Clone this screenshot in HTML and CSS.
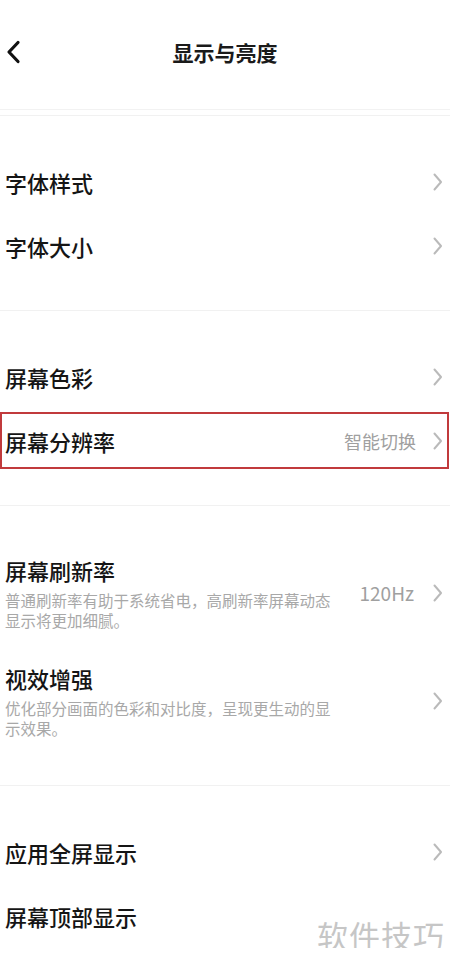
FILE: index.html
```html
<!DOCTYPE html>
<html lang="zh-CN">
<head>
  <meta charset="UTF-8">
  <meta name="viewport" content="width=device-width, initial-scale=1.0">
  <title>显示与亮度</title>
  <link rel="stylesheet" href="styles.css">
</head>
<body>

  <div class="header">
    <div class="bar">
      <svg class="back" width="15" height="24" viewBox="0 0 15 24">
        <path d="M12 2.5 L3 12 L12 21.5" fill="none" stroke="#111" stroke-width="3.2" stroke-linecap="round" stroke-linejoin="round"/>
      </svg>
      <h1 class="title">显示与亮度</h1>
      <span></span>
    </div>
  </div>

  <!-- 字体 -->
  <div class="section first">
    <div class="row">
      <span class="label">字体样式</span>
      <svg class="arrow" width="10" height="18" viewBox="0 0 10 18"><path d="M1.5 1.5 L8 9 L1.5 16.5"/></svg>
    </div>
    <div class="row">
      <span class="label">字体大小</span>
      <svg class="arrow" width="10" height="18" viewBox="0 0 10 18"><path d="M1.5 1.5 L8 9 L1.5 16.5"/></svg>
    </div>
  </div>

  <!-- 屏幕 -->
  <div class="section">
    <div class="row">
      <span class="label">屏幕色彩</span>
      <svg class="arrow" width="10" height="18" viewBox="0 0 10 18"><path d="M1.5 1.5 L8 9 L1.5 16.5"/></svg>
    </div>
    <div class="row marked">
      <span class="label">屏幕分辨率</span>
      <span class="value">智能切换</span>
      <svg class="arrow" width="10" height="18" viewBox="0 0 10 18"><path d="M1.5 1.5 L8 9 L1.5 16.5"/></svg>
    </div>
  </div>

  <!-- 刷新率 / 视效 -->
  <div class="section detail">
    <div class="row tall">
      <div class="text">
        <span class="label">屏幕刷新率</span>
        <p class="desc">普通刷新率有助于系统省电，高刷新率屏幕动态显示将更加细腻。</p>
      </div>
      <span class="value">120Hz</span>
      <svg class="arrow" width="10" height="18" viewBox="0 0 10 18"><path d="M1.5 1.5 L8 9 L1.5 16.5"/></svg>
    </div>
    <div class="row tall">
      <div class="text">
        <span class="label">视效增强</span>
        <p class="desc">优化部分画面的色彩和对比度，呈现更生动的显示效果。</p>
      </div>
      <svg class="arrow" width="10" height="18" viewBox="0 0 10 18"><path d="M1.5 1.5 L8 9 L1.5 16.5"/></svg>
    </div>
  </div>

  <!-- 全屏 -->
  <div class="section last">
    <div class="row">
      <span class="label">应用全屏显示</span>
      <svg class="arrow" width="10" height="18" viewBox="0 0 10 18"><path d="M1.5 1.5 L8 9 L1.5 16.5"/></svg>
    </div>
    <div class="row">
      <span class="label">屏幕顶部显示</span>
    </div>
  </div>

  <div class="watermark">软件技巧</div>

</body>
</html>
```

FILE: styles.css
```css
body {
  margin: 0;
  background-color: #ffffff;
  font-family: "Noto Sans CJK SC", "Noto Sans", sans-serif;
  color: #151515;
  position: relative;
  overflow: hidden;
}

/* 상단 바 */
.header {
  padding-bottom: 5px;
  border-bottom: 1px solid #f2f2f2;
}

.bar {
  height: 104px;
  display: grid;
  grid-template-columns: 40px 1fr 40px;
  align-items: center;
}

.back {
  margin-left: 6px;
}

.title {
  margin: 0;
  text-align: center;
  font-size: 21px;
  font-weight: 700;
  line-height: 28px;
  color: #1a1a1a;
}

/* 섹션 */
.section {
  border-top: 1px solid #f1f1f1;
  padding: 34px 0 32px;
}

.section.first {
  margin-top: 5px;
}

.section.detail {
  padding-bottom: 29px;
}

.section.last {
  padding-bottom: 0;
}

.row {
  height: 64px;
  display: flex;
  align-items: center;
  padding: 0 7px 0 5px;
  box-sizing: border-box;
}

.row.tall {
  height: auto;
  padding-top: 15px;
  padding-bottom: 18px;
}

.row.marked {
  height: 57px;
  margin: 3px 1px 4px 0;
  padding-left: 3px;
  border: 2px solid #c13a3c;
  padding-right: 4px;
}

.text {
  display: flex;
  flex-direction: column;
}

.label {
  font-size: 22px;
  font-weight: 500;
  line-height: 30px;
  flex: 1;
}

.text .label {
  flex: none;
}

.desc {
  margin: 5px 0 0;
  width: 328px;
  font-size: 15.5px;
  line-height: 20px;
  color: #a8a8a8;
}

.value {
  margin-left: auto;
  margin-right: 17px;
  font-size: 18px;
  color: #a0a0a0;
}

.row.tall .value {
  margin-right: 19px;
  font-size: 19px;
}

.arrow {
  margin-left: auto;
  flex: none;
}

.value + .arrow {
  margin-left: 0;
}

.arrow path {
  fill: none;
  stroke: #bababa;
  stroke-width: 2;
  stroke-linecap: round;
  stroke-linejoin: round;
}

/* 워터마크 */
.watermark {
  position: absolute;
  right: 5px;
  top: 915px;
  font-size: 31px;
  line-height: 40px;
  color: #c6c6c6;
  letter-spacing: 1px;
}
```
